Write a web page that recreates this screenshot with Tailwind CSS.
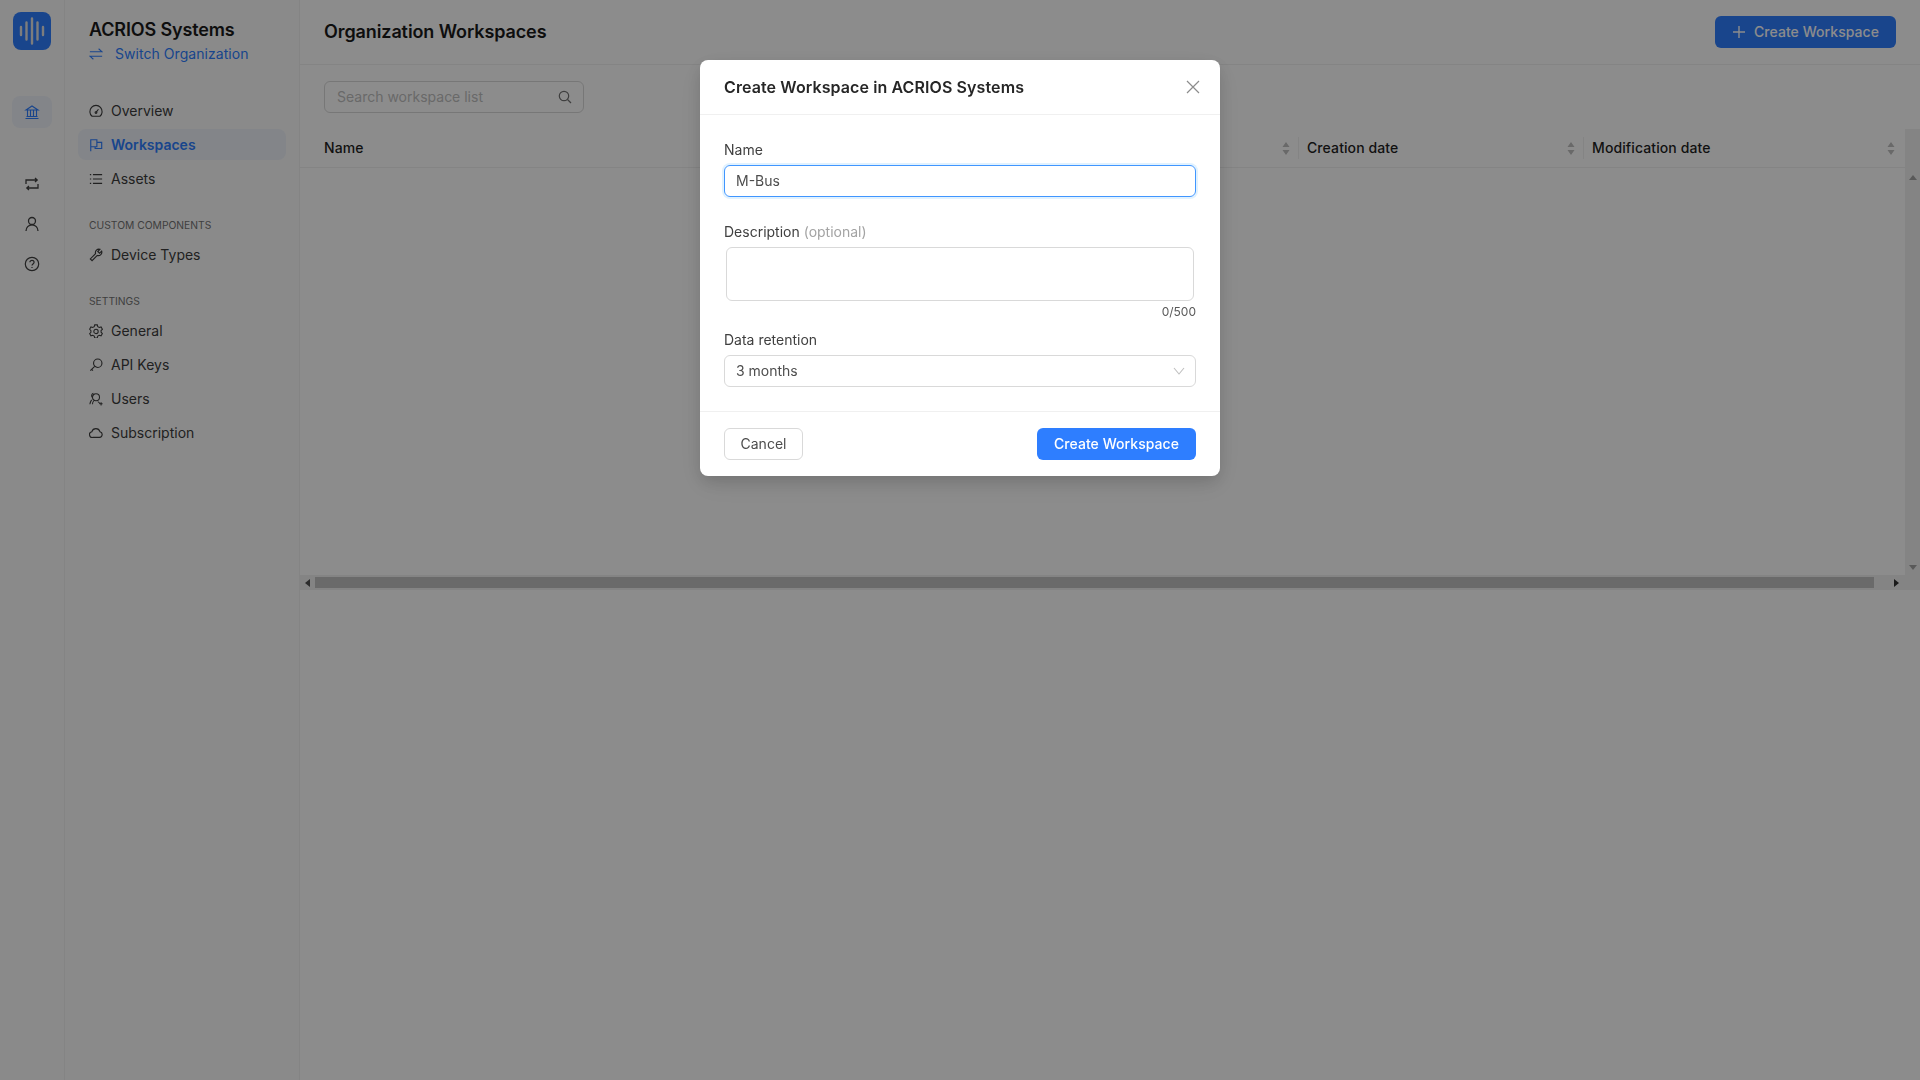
<!doctype html>
<html lang="en">
  <head>
    <meta charset="UTF-8" />
    <meta name="viewport" content="width=device-width, initial-scale=1.0" />
    <title>Organization Workspaces</title>
    <script src="https://cdn.jsdelivr.net/npm/@tailwindcss/browser@4"></script>
  </head>
  <body class="font-[family-name:Inter,sans-serif] text-sm text-[#262626] bg-white">
    <div class="flex h-[1080px] w-[1920px] overflow-hidden">

      <!-- icon rail -->
      <aside class="w-[65px] shrink-0 border-r border-[#f0f0f0] bg-[#fcfcfc] flex flex-col items-center pt-3">
        <div class="w-[38px] h-[38px] rounded-lg bg-[#2e7eff] flex items-center justify-center">
          <svg width="30" height="30" viewBox="0 0 30 30" stroke="#e3e3e3" stroke-width="2.4" stroke-linecap="round"><path d="M4 11v8M9.500 6.500v17M15 2.500v25M20.500 6.500v17M26 11v8"/></svg>
        </div>
        <div class="mt-[46px] w-10 h-8 rounded-lg bg-[#eef2f9] flex items-center justify-center text-[#2e7eff]">
          <svg width="16" height="16" viewBox="0 0 16 16" fill="none" stroke="currentColor" stroke-width="1.100"><path d="M2 6 8 2l6 4zM3.500 6.500v6M6.500 6.500v6M9.500 6.500v6M12.500 6.500v6M2.500 12.500h11M1.500 14.500h13"/></svg>
        </div>
        <div class="mt-[48px] flex flex-col items-center gap-6 text-[#404040]">
          <svg width="16" height="16" viewBox="0 0 16 16" fill="none" stroke="currentColor" stroke-width="1.300"><path d="M2 8V4h11M11 2l2.200 2L11 6M14 8v4H3M5 10l-2.200 2L5 14"/></svg>
          <svg width="16" height="16" viewBox="0 0 16 16" fill="none" stroke="currentColor" stroke-width="1.300"><circle cx="8" cy="5" r="3.500"/><path d="M2 15c0-3.500 2.500-6.200 6-6.200s6 2.700 6 6.200"/></svg>
          <svg width="16" height="16" viewBox="0 0 16 16" fill="none" stroke="currentColor" stroke-width="1.200"><circle cx="8" cy="8" r="6.700"/><path d="M5.900 6.300c0-1.200 1-2 2.100-2s2.100.8 2.100 1.900c0 1.700-2.100 1.700-2.100 3.300M8 11v1"/></svg>
        </div>
      </aside>

      <!-- section sidebar -->
      <aside class="w-[235px] shrink-0 border-r border-[#f0f0f0] bg-[#fcfcfc] px-[13px]">
        <div class="pl-[11px] pt-[19px]">
          <div class="text-lg leading-[22px] font-semibold text-[#1a1a1a] tracking-[-0.15px]">ACRIOS Systems</div>
          <div class="mt-0.5 flex items-center h-[22px] text-[#2e7eff]">
            <svg width="14" height="14" viewBox="0 0 16 16" fill="none" stroke="currentColor" stroke-width="1.200"><path d="M1 5.500h14L11 2M15 10.500H1L5 14"/></svg>
            <span class="ml-3 tracking-[0.05px]">Switch Organization</span>
          </div>
        </div>
        <nav class="mt-[30px] flex flex-col gap-[3px]">
          <a class="h-[31px] pl-[11px] flex items-center gap-2 text-[#3d3d3d]">
            <svg class="shrink-0" width="14" height="14" viewBox="0 0 16 16" fill="none" stroke="currentColor" stroke-width="1.300"><path d="M3.500 14h9A7 7 0 1 0 3.500 14zM8 9.500l2.800-3.500"/><circle cx="8" cy="9.800" r="1"/></svg>
            Overview
          </a>
          <a class="h-[31px] pl-[11px] flex items-center gap-2 rounded-lg bg-[#eef2f9] text-[#2e7eff] font-semibold">
            <svg class="shrink-0" width="14" height="14" viewBox="0 0 16 16" fill="none" stroke="currentColor" stroke-width="1.300"><path d="M2 15V2h7v8H2M9 5h5.500v7H7v-2"/></svg>
            Workspaces
          </a>
          <a class="h-[31px] pl-[11px] flex items-center gap-2 text-[#3d3d3d]">
            <svg class="shrink-0" width="14" height="14" viewBox="0 0 16 16" fill="none" stroke="currentColor" stroke-width="1.300"><path d="M4.500 3H15M4.500 8H15M4.500 13H15M1 3h1.500M1 8h1.500M1 13h1.500"/></svg>
            Assets
          </a>
        </nav>
        <div class="mt-[21px] pl-[11px] h-5 flex items-center text-[10.300px] text-[#737373]">CUSTOM COMPONENTS</div>
        <nav class="mt-1">
          <a class="h-[31px] pl-[11px] flex items-center gap-2 text-[#3d3d3d]">
            <svg class="shrink-0" width="14" height="14" viewBox="0 0 16 16" fill="none" stroke="currentColor" stroke-width="1.300"><path d="M14.500 3.500 12 6 10 4l2.500-2.500a4 4 0 0 0-5 5L1.500 12.500 3.500 14.500 9.500 8.500a4 4 0 0 0 5-5z"/></svg>
            Device Types
          </a>
        </nav>
        <div class="mt-[21px] pl-[11px] h-5 flex items-center text-[10.300px] text-[#737373]">SETTINGS</div>
        <nav class="mt-1 flex flex-col gap-[3px]">
          <a class="h-[31px] pl-[11px] flex items-center gap-2 text-[#3d3d3d]">
            <svg class="shrink-0" width="14" height="14" viewBox="0 0 16 16" fill="none" stroke="currentColor" stroke-width="1.200"><path d="M6.500 1h3l.5 2 1.800 1 2-.6 1.500 2.600-1.500 1.500v1.900l1.500 1.500-1.500 2.600-2-.6-1.800 1-.5 2h-3l-.5-2-1.800-1-2 .6L.7 11l1.500-1.500V7.600L.7 6l1.500-2.600 2 .6 1.800-1z"/><circle cx="8" cy="8.500" r="2.500"/></svg>
            General
          </a>
          <a class="h-[31px] pl-[11px] flex items-center gap-2 text-[#3d3d3d]">
            <svg class="shrink-0" width="14" height="14" viewBox="0 0 16 16" fill="none" stroke="currentColor" stroke-width="1.300"><circle cx="10" cy="6" r="4.800"/><path d="M6.500 9.500 1.500 14.500M3 13l1.500 1.500"/></svg>
            API Keys
          </a>
          <a class="h-[31px] pl-[11px] flex items-center gap-2 text-[#3d3d3d]">
            <svg class="shrink-0" width="14" height="14" viewBox="0 0 16 16" fill="none" stroke="currentColor" stroke-width="1.200"><circle cx="8" cy="6" r="4"/><path d="M5 1.500C3 2 2.500 4 3.500 6M3 9c-1 1.500-1.800 3-2 5M5.500 10c-1 1-1.500 2.500-1.500 4M10 11c1 .5 2 1.500 2.500 2.500M12 13.500h3.500M13.800 11.800v3.500"/></svg>
            Users
          </a>
          <a class="h-[31px] pl-[11px] flex items-center gap-2 text-[#3d3d3d]">
            <svg class="shrink-0" width="14" height="14" viewBox="0 0 16 16" fill="none" stroke="currentColor" stroke-width="1.300"><path d="M4.500 13h7.500a3.300 3.300 0 0 0 .5-6.500 4.800 4.800 0 0 0-9.200 0A3.300 3.300 0 0 0 4.500 13z"/></svg>
            Subscription
          </a>
        </nav>
      </aside>

      <!-- main -->
      <main class="flex-1 min-w-0 flex flex-col bg-white">
        <header class="h-[65px] shrink-0 border-b border-[#f0f0f0] pl-6 pr-6 flex items-center justify-between">
          <h1 class="text-lg font-semibold text-[#1a1a1a] tracking-[-0.1px]">Organization Workspaces</h1>
          <button class="h-8 w-[181px] rounded-md bg-[#2e7eff] text-white font-medium flex items-center justify-center gap-2 tracking-[0.05px]">
            <svg width="14" height="14" viewBox="0 0 14 14" stroke="currentColor" stroke-width="1.400"><path d="M7 1v12M1 7h12"/></svg>
            Create Workspace
          </button>
        </header>

        <div class="pt-4 pl-6">
          <div class="w-[260px] h-8 border border-[#d9d9d9] rounded-md pl-3 pr-[11px] flex items-center justify-between text-[#bfbfbf]">
            <span>Search workspace list</span>
            <svg width="14" height="14" viewBox="0 0 14 14" fill="none" stroke="#737373" stroke-width="1.200"><circle cx="6" cy="6" r="4.700"/><path d="m9.500 9.500 3.500 3.500"/></svg>
          </div>
        </div>

        <!-- table with its scrollbars -->
        <div class="mt-4 h-[461px] flex">
          <div class="flex-1 min-w-0 flex flex-col">
            <div class="h-[39px] shrink-0 border-b border-[#f0f0f0] flex items-center font-medium text-[#1f1f1f] tracking-[0.1px]">
              <div class="flex-1 pl-6 pr-2 flex items-center justify-between">
                <span>Name</span>
                <svg width="8" height="13" viewBox="0 0 8 13" fill="#bfbfbf"><path d="M4 0l3.500 5H.5zM4 13 .5 8h7z"/></svg>
              </div>
              <div class="w-[285px] h-[22px] border-l border-[#f0f0f0] pl-2 pr-2 flex items-center justify-between">
                <span>Creation date</span>
                <svg width="8" height="13" viewBox="0 0 8 13" fill="#bfbfbf"><path d="M4 0l3.500 5H.5zM4 13 .5 8h7z"/></svg>
              </div>
              <div class="w-[322px] h-[22px] border-l border-[#f0f0f0] pl-2 pr-2.5 flex items-center justify-between">
                <span>Modification date</span>
                <svg width="8" height="13" viewBox="0 0 8 13" fill="#bfbfbf"><path d="M4 0l3.500 5H.5zM4 13 .5 8h7z"/></svg>
              </div>
            </div>
            <div class="flex-1"></div>
            <!-- horizontal scrollbar -->
            <div class="h-[15px] shrink-0 bg-[#f1f1f1] flex items-center">
              <div class="w-[15px] flex justify-center">
                <svg width="5" height="8" viewBox="0 0 5 8" fill="#505050"><path d="M5 0v8L0 4z"/></svg>
              </div>
              <div class="w-[1559px] h-[11px] bg-[#c1c1c1]"></div>
              <div class="flex-1 flex justify-end pr-[6px]">
                <svg width="5" height="8" viewBox="0 0 5 8" fill="#303030"><path d="M0 0v8l5-4z"/></svg>
              </div>
            </div>
          </div>
          <!-- vertical scrollbar -->
          <div class="w-[15px] shrink-0 bg-[#f1f1f1] flex flex-col items-center">
            <svg class="mt-[46px]" width="8" height="5" viewBox="0 0 8 5" fill="#a3a3a3"><path d="M0 5h8L4 0z"/></svg>
            <svg class="mt-auto mb-[20px]" width="8" height="5" viewBox="0 0 8 5" fill="#a3a3a3"><path d="M0 0h8L4 5z"/></svg>
          </div>
        </div>
      </main>
    </div>

    <!-- modal over a dim layer -->
    <div class="fixed inset-0 bg-black/45 flex justify-center items-start pt-[60px]">
      <div class="w-[520px] rounded-lg bg-white shadow-[0_6px_16px_rgba(0,0,0,0.12),0_9px_28px_rgba(0,0,0,0.08)]">
        <div class="h-[55px] border-b border-[#f0f0f0] pl-6 pr-5 flex items-center justify-between">
          <h2 class="text-base font-semibold text-[#262626] tracking-[0.1px]">Create Workspace in ACRIOS Systems</h2>
          <svg width="14" height="14" viewBox="0 0 14 14" stroke="#8c8c8c" stroke-width="1.200"><path d="M1 1l12 12M13 1 1 13"/></svg>
        </div>
        <div class="px-6 pt-6 pb-6 border-b border-[#f0f0f0]">
          <label class="block h-[22px] leading-[22px] text-[#404040] mb-1">Name</label>
          <div class="h-8 border border-[#4096ff] rounded-md shadow-[0_0_0_2px_rgba(5,145,255,0.12)] px-[11px] flex items-center text-[#4d4d4d]">M-Bus</div>
          <label class="block mt-6 h-[22px] leading-[22px] text-[#404040] mb-1">Description <span class="text-[#a3a3a3]">(optional)</span></label>
          <div class="mx-0.5 h-[54px] border border-[#d9d9d9] rounded-md"></div>
          <div class="h-[20px] leading-[22px] text-right text-xs text-[#595959]">0/500</div>
          <label class="block mt-2 h-[22px] leading-[22px] text-[#404040] mb-1">Data retention</label>
          <div class="h-8 border border-[#d9d9d9] rounded-md pl-[11px] pr-2.5 flex items-center justify-between text-[#4d4d4d]">
            <span>3 months</span>
            <svg width="12" height="8" viewBox="0 0 12 8" fill="none" stroke="#bfbfbf" stroke-width="1.100"><path d="M1 1l5 6 5-6"/></svg>
          </div>
        </div>
        <div class="px-6 py-4 flex items-center justify-between">
          <button class="h-8 w-[79px] border border-[#d9d9d9] rounded-md text-[#4d4d4d]">Cancel</button>
          <button class="h-8 w-[159px] rounded-md bg-[#2e7eff] text-white font-medium tracking-[0.05px]">Create Workspace</button>
        </div>
      </div>
    </div>
  </body>
</html>
